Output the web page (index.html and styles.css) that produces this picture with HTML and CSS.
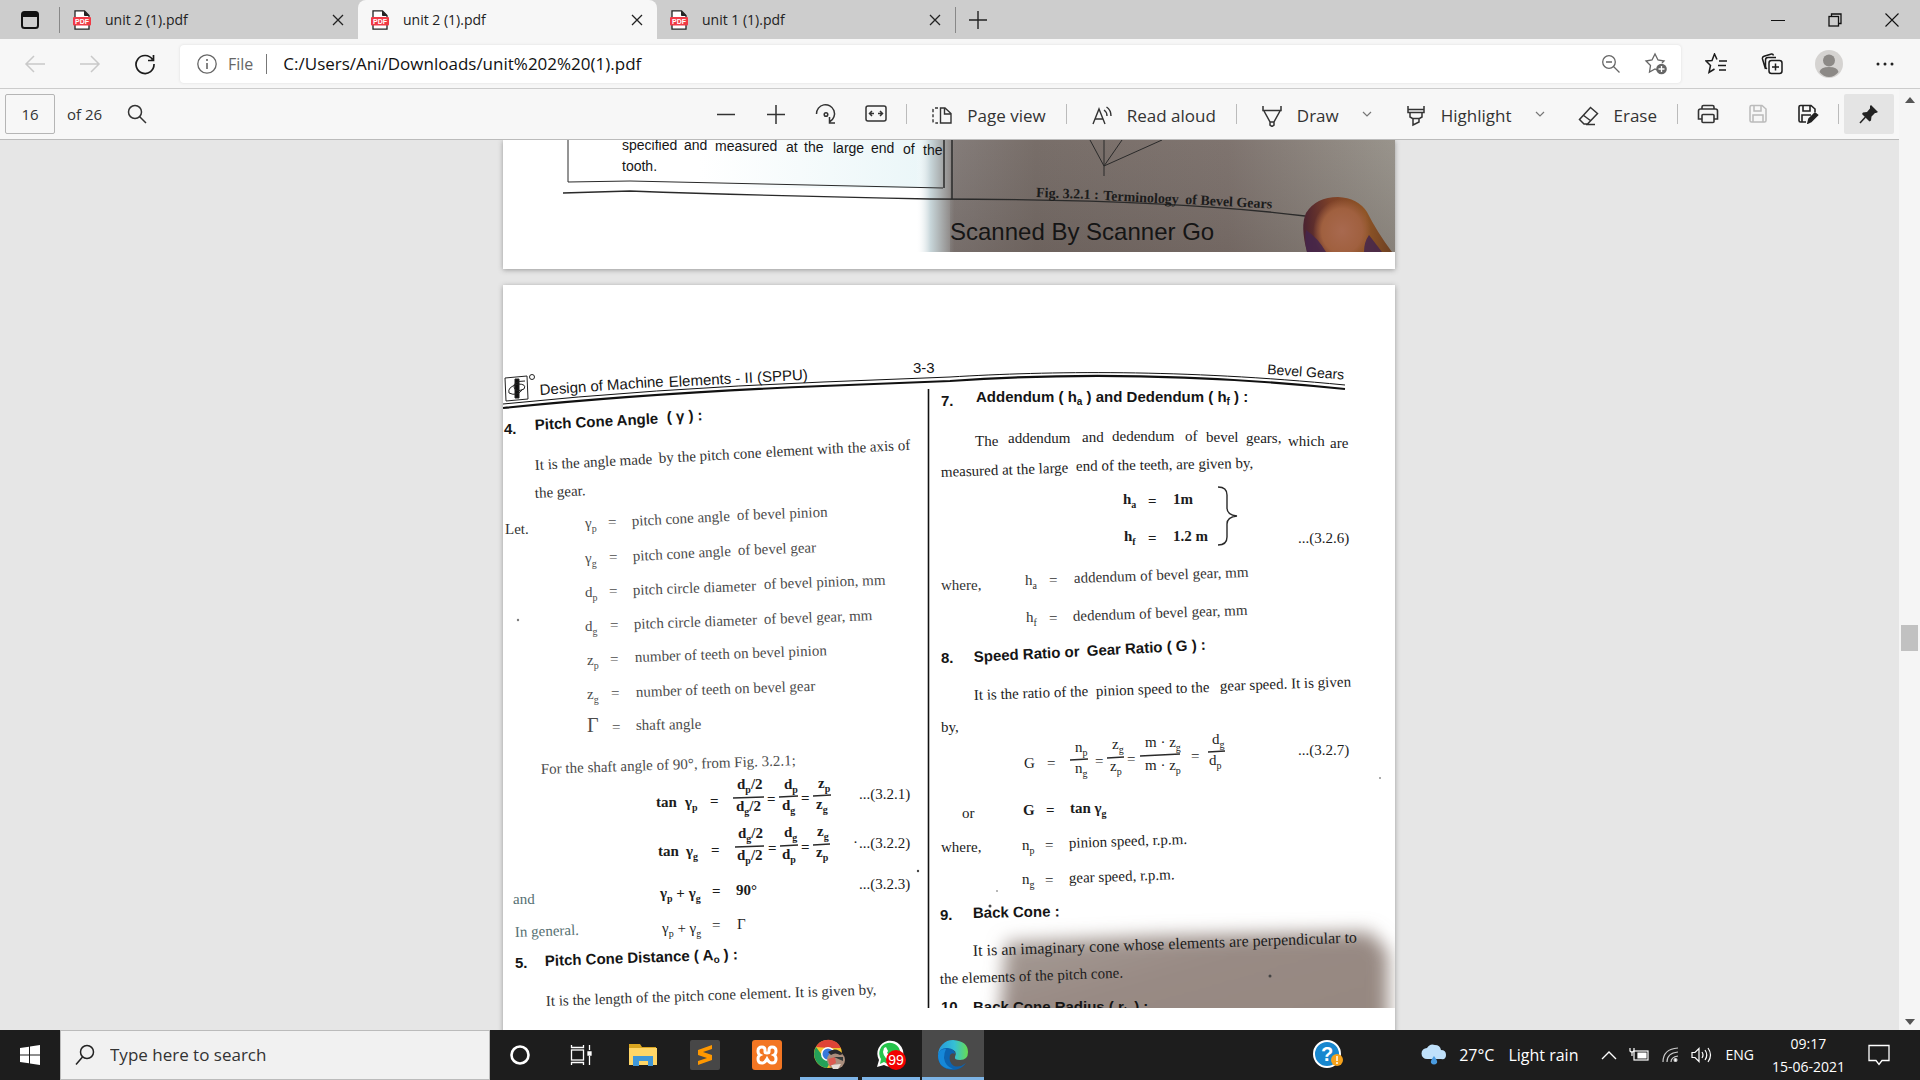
FILE: index.html
```html
<!DOCTYPE html>
<html lang="en">
<head>
<meta charset="utf-8">
<title>unit 2 (1).pdf</title>
<link rel="stylesheet" href="styles.css">
</head>
<body>
<svg class="defs" aria-hidden="true">
  <symbol id="pdf" viewBox="0 0 20 20"><path d="M3 .8h9.5L17 5.5v13.700H3z" fill="#fff" stroke="#222" stroke-width="1.300"/><path d="M12.500 1v4.500H17" fill="#222" stroke="#222"/><rect x="1" y="7" width="18" height="8.500" rx="1" fill="#f03a46"/></symbol>
  <symbol id="close" viewBox="0 0 12 12"><path d="M1 1l10 10M11 1L1 11" stroke="#222" stroke-width="1.300"/></symbol>
  <symbol id="chev" viewBox="0 0 10 10"><path d="M1 3l4 4 4-4" fill="none" stroke="#777" stroke-width="1.200"/></symbol>
</svg>

<header class="tabs">
  <button class="tab-actions" aria-label="Tab actions"><svg width="18" height="18" viewBox="0 0 18 18"><rect x="1" y="1" width="16" height="16" rx="2.500" fill="none" stroke="#111" stroke-width="2"/><path d="M1 3q0-2 2-2h12q2 0 2 2v3H1z" fill="#111"/></svg></button>
  <div class="tab first"><svg class="i20"><use href="#pdf"/><text x="10" y="14" text-anchor="middle" class="pdf-label">PDF</text></svg><span>unit 2 (1).pdf</span><button aria-label="Close tab"><svg class="i12"><use href="#close"/></svg></button></div>
  <div class="tab active"><svg class="i20"><use href="#pdf"/><text x="10" y="14" text-anchor="middle" class="pdf-label">PDF</text></svg><span>unit 2 (1).pdf</span><button aria-label="Close tab"><svg class="i12"><use href="#close"/></svg></button></div>
  <div class="tab last"><svg class="i20"><use href="#pdf"/><text x="10" y="14" text-anchor="middle" class="pdf-label">PDF</text></svg><span>unit 1 (1).pdf</span><button aria-label="Close tab"><svg class="i12"><use href="#close"/></svg></button></div>
  <button class="new-tab" aria-label="New tab"><svg width="18" height="18"><path d="M9 0v18M0 9h18" stroke="#222" stroke-width="1.400"/></svg></button>
  <div class="win">
    <button aria-label="Minimize"><svg width="14" height="14"><path d="M0 7.500h14" stroke="#111"/></svg></button>
    <button aria-label="Restore"><svg width="14" height="14" fill="none" stroke="#111" stroke-width="1.300"><rect x="1" y="3.500" width="9.500" height="9.500"/><path d="M3.500 3.500V1H13v9.500h-2.500"/></svg></button>
    <button aria-label="Close"><svg width="14" height="14"><path d="M.5.5l13 13M13.500.5l-13 13" stroke="#111" stroke-width="1.100"/></svg></button>
  </div>
</header>

<nav class="address">
  <button class="nav" aria-label="Back"><svg width="22" height="20" fill="none" stroke="#c9c9c9" stroke-width="1.500"><path d="M21 10H2M10 2l-8 8 8 8"/></svg></button>
  <button class="nav" aria-label="Forward"><svg width="22" height="20" fill="none" stroke="#c9c9c9" stroke-width="1.500"><path d="M1 10h19M12 2l8 8-8 8"/></svg></button>
  <button class="nav" aria-label="Refresh"><svg width="22" height="22" fill="none" stroke="#1b1b1b" stroke-width="1.700"><path d="M18.500 6.500A9 9 0 1 0 20 11M19.500 2v5.500H14"/></svg></button>
  <div class="urlbox">
    <svg width="20" height="20" fill="none" stroke="#666"><circle cx="10" cy="10" r="9.200" stroke-width="1.300"/><path d="M10 9v6M10 5v2" stroke-width="1.600"/></svg>
    <label for="url">File</label>
    <input id="url" value="C:/Users/Ani/Downloads/unit%202%20(1).pdf">
    <button aria-label="Zoom"><svg width="20" height="20" fill="none" stroke="#666" stroke-width="1.300"><circle cx="8" cy="8" r="6.300"/><path d="M12.500 12.500l6 6M5 8h6"/></svg></button>
    <button aria-label="Add to favorites"><svg width="24" height="24" fill="none" stroke="#666" stroke-width="1.300"><path d="M13 18l-2-1-5.500 3 1-6.500L2 9l6-1 3-6 3 6 6 1-2 2"/><circle cx="17.500" cy="17" r="5.300" fill="#666" stroke="none"/><path d="M17.500 14v6M14.500 17h6" stroke="#fff"/></svg></button>
  </div>
  <button class="nav" aria-label="Favorites"><svg width="24" height="22" fill="none" stroke="#1b1b1b" stroke-width="1.500"><path d="M12 6.500L9.500 1 7 7.500 1 8l4.500 4.500L4 19.500l5.500-3.500M14 8h8M13 12.500h8M14 17h7"/></svg></button>
  <button class="nav" aria-label="Collections"><svg width="24" height="22" fill="none" stroke="#1b1b1b" stroke-width="1.500"><path d="M4.500 16L1.500 6q-.5-2 1.500-2.700L10.500 1q1.500-.3 2 1.500M6 16q-1.500-1-1.500-3V7q0-2.500 2.500-2.500h8"/><rect x="8" y="7.500" width="13" height="13" rx="2.500"/><path d="M14.500 10.500v7M11 14h7"/></svg></button>
  <button class="nav" aria-label="Profile"><svg width="28" height="28"><circle cx="14" cy="14" r="14" fill="#d5d3d1"/><circle cx="14" cy="10.500" r="6" fill="#8c8986"/><path d="M4.500 22q1-5 9.500-5t9.500 5q-4 5-9.500 5t-9.500-5z" fill="#8c8986"/></svg></button>
  <button class="nav" aria-label="Settings and more"><svg width="18" height="4" fill="#222"><circle cx="2" cy="2" r="1.500"/><circle cx="9" cy="2" r="1.500"/><circle cx="16" cy="2" r="1.500"/></svg></button>
</nav>

<div class="viewer">
  <div class="viewer-main">
    <div class="toolbar">
      <input id="page" class="page-no" value="16"><label for="page">of 26</label>
      <button class="find" aria-label="Find"><svg width="20" height="20" fill="none" stroke="#333" stroke-width="1.500"><circle cx="8" cy="8" r="6.500"/><path d="M12.500 12.500l6.500 6.500"/></svg></button>
      <div class="tools">
        <button class="ib" aria-label="Zoom out"><svg width="20" height="20"><path d="M1 10.500h18" stroke="#333" stroke-width="1.500"/></svg></button>
        <button class="ib" aria-label="Zoom in"><svg width="20" height="20"><path d="M1 10.500h18M10 1v19" stroke="#333" stroke-width="1.500"/></svg></button>
        <button class="ib" aria-label="Rotate"><svg width="22" height="22" fill="none" stroke="#333" stroke-width="1.500"><path d="M1.500 11A9 9 0 1 1 15 18.500M14.500 14v6H20"/><circle cx="11" cy="11.500" r="1.800"/></svg></button>
        <button class="ib" aria-label="Fit to width"><svg width="22" height="20" fill="none" stroke="#333" stroke-width="1.500"><rect x="1" y="2" width="20" height="15" rx="2"/><path d="M9 9.500H4.500M7 7L4.500 9.500 7 12M13 9.500h4.500M15 7l2.500 2.500L15 12"/></svg></button>
        <i class="sep"></i>
        <button class="tb"><svg width="22" height="20" viewBox="0 0 22 20" fill="none" stroke="#333" stroke-width="1.400"><path d="M9.500 2H14l6 5.500V17H9.500zM13.500 2v6H20"/><path d="M7 2H4Q2 2 2 4v11q0 2 2 2h3" stroke-dasharray="3 2"/></svg>Page view</button>
        <i class="sep"></i>
        <button class="tb"><svg width="22" height="20" fill="none" stroke="#333" stroke-width="1.400"><path d="M2 18L8 3l6 15M4 13h8M13 4q3 2 3 6M15.500 1Q20 4 20 10"/></svg>Read aloud</button>
        <i class="sep"></i>
        <button class="tb tight"><svg width="22" height="22" fill="none" stroke="#333" stroke-width="1.500"><path d="M2 1v4.500h18V1M3 6l6 11v3l2 1.500 2-1.500v-3l6-11M9 17h4"/></svg>Draw</button>
        <button class="cb" aria-label="Draw options"><svg class="i10"><use href="#chev"/></svg></button>
        <button class="tb tight"><svg width="22" height="22" fill="none" stroke="#333" stroke-width="1.500"><path d="M3 1v6.500h16V1M3 4.500h16M5 8v4l2.500 1.500h7L17 12V8M8 14v6l6-3v-3"/></svg>Highlight</button>
        <button class="cb" aria-label="Highlight options"><svg class="i10"><use href="#chev"/></svg></button>
        <button class="tb"><svg width="22" height="22" fill="none" stroke="#333" stroke-width="1.500"><path d="M12.500 2.500l7 6-10 10.500H6L1.500 14.500zM5 10l8 6M8 19.500h9"/></svg>Erase</button>
        <i class="sep"></i>
        <button class="ib" aria-label="Print"><svg width="22" height="20" fill="none" stroke="#333" stroke-width="1.600"><path d="M5 5V3q0-1.500 1.500-1.500h9Q17 1.500 17 3v2M5 15H1.500V7q0-2 2-2h15q2 0 2 2v8H17"/><rect x="5" y="10.500" width="12" height="8" rx="1"/></svg></button>
        <button class="ib" aria-label="Save" disabled><svg width="20" height="20" fill="none" stroke="#bbb" stroke-width="1.500"><path d="M2 3q0-1.500 1.500-1.500H14L18 5v11.500q0 1.500-1.500 1.500h-13Q2 18 2 16.500zM6 2v5h7V2M5 18v-7h10v7"/></svg></button>
        <button class="ib" aria-label="Save as"><svg width="22" height="20" fill="none" stroke="#222" stroke-width="1.600"><path d="M9 18H3.500Q2 18 2 16.500V3q0-1.500 1.500-1.500H14L18 5v3M6 2v5h7V2M5 18v-7h9"/><path d="M11 19l1-4 6-6 2.500 2-6.500 6.500z" fill="#222"/></svg></button>
        <i class="sep"></i>
        <button class="ib pin" aria-label="Unpin toolbar"><svg width="22" height="20"><path d="M13 1l7 7-2 1-1 0-3.500 3.500-.5 4-1.500 1L4 10l1-1.500 4-.5L12 4.500V2z" fill="#222"/><path d="M7.500 13L2 19" stroke="#222" stroke-width="1.500"/></svg></button>
      </div>
    </div>

    <main class="pages">
      <section class="sheet">
        <svg class="scan" viewBox="503 140 892 129">
          <defs>
            <linearGradient id="photo"><stop offset="0" stop-color="#fff" stop-opacity="0"/><stop offset=".03" stop-color="#c8d6da"/><stop offset=".08" stop-color="#847c79"/><stop offset=".25" stop-color="#786e69"/><stop offset=".65" stop-color="#7f746f"/><stop offset="1" stop-color="#99948c"/></linearGradient>
            <linearGradient id="tint"><stop offset="0" stop-color="#fff"/><stop offset="1" stop-color="#eaf6f8"/></linearGradient>
            <linearGradient id="dim" x2="0" y2="1"><stop offset="0" stop-color="#444" stop-opacity="0"/><stop offset="1" stop-color="#3a2d28" stop-opacity=".18"/></linearGradient>
            <linearGradient id="thumb"><stop offset="0" stop-color="#4a2230"/><stop offset=".3" stop-color="#7c4028"/><stop offset=".7" stop-color="#8f5526"/><stop offset="1" stop-color="#6c3f22"/></linearGradient>
            <radialGradient id="nail"><stop offset="0" stop-color="#a8694f"/><stop offset=".7" stop-color="#a0603f"/><stop offset="1" stop-color="#a0603f" stop-opacity="0"/></radialGradient>
            <clipPath id="clip1"><rect x="503" y="140" width="892" height="112"/></clipPath>
          </defs>
          <g clip-path="url(#clip1)">
            <rect x="700" y="140" width="230" height="48" fill="url(#tint)"/>
            <rect x="916" y="140" width="479" height="112" fill="url(#photo)"/>
            <rect x="950" y="140" width="445" height="112" fill="url(#dim)"/>
            <g class="rule"><path d="M568 140v42l62-1 313 7"/><path d="M944 140v48M952 140v59" stroke-width="1.500"/><path d="M563 193l67-2q140 5 300 8 240 0 375 17" stroke-width="1.300"/><path d="M1090 140l14 26 18-26M1104 140v36M1104 166l58-26" stroke-width="1"/></g>
            <path d="M1307 252Q1300 226 1306 213Q1316 197 1338 197Q1358 198 1367 212Q1377 232 1392 252z" fill="url(#thumb)"/>
            <ellipse cx="1342" cy="231" rx="29" ry="32" fill="url(#nail)"/>
            <path d="M1307 252q-3-12-1-22 12 8 20 22zM1364 252q0-10 5-17l13 17z" fill="#44264c" opacity=".85"/>
            <g class="sans s14"><text x="622" y="150">specified</text><text x="684" y="150">and</text><text x="715" y="151">measured</text><text x="786" y="152">at</text><text x="804" y="152">the</text><text x="833" y="153">large</text><text x="871" y="153">end</text><text x="903" y="154">of</text><text x="923" y="155">the</text><text x="622" y="171">tooth.</text></g>
            <g class="serif b s14"><text transform="translate(1036 197) rotate(2)">Fig. 3.2.1 :</text><text transform="translate(1103 200) rotate(3)">Terminology</text><text transform="translate(1185 204) rotate(3)">of Bevel Gears</text></g>
            <text class="sans s24" x="950" y="240">Scanned By Scanner Go</text>
          </g>
        </svg>
      </section>

      <section class="sheet">
        <svg class="scan" viewBox="503 285 892 760">
          <defs>
            <clipPath id="clip2"><rect x="503" y="285" width="892" height="723"/></clipPath>
            <filter id="soft" x="-10%" y="-30%" width="120%" height="160%"><feGaussianBlur stdDeviation="9"/></filter>
            <linearGradient id="shade" y2="1"><stop offset="0" stop-color="#a89e98"/><stop offset=".4" stop-color="#988a84"/><stop offset="1" stop-color="#95877f"/></linearGradient>
          </defs>
          <g clip-path="url(#clip2)">
            <path d="M1006 942l150-6 100-2 114-2 18 20v90H998z" fill="url(#shade)" filter="url(#soft)"/>
            <g fill="none" stroke="#111"><path d="M503 404Q650 389 823 382L950 377C1050 371 1180 369 1345 385" stroke-width="1"/><path d="M503 408Q650 393 823 386L950 381C1050 374 1180 372 1345 389" stroke-width="2.200"/><path d="M928.500 389v619" stroke-width="1.600"/></g>
            <g fill="none" stroke="#222"><path d="M505 378l22-2 1 23-22 2z"/><path d="M515 379h4v19h-4z" fill="#111"/><path d="M525 381q-12 0-11 6t10 2q3-5-6-5-11 3-9 9 8 4 14-4"/><circle cx="532" cy="377" r="2.500"/></g>

            <g class="sans s15">
              <text transform="translate(540 395) rotate(-4)">Design of Machine</text><text transform="translate(669 387) rotate(-3)">Elements - II (SPPU)</text>
              <text x="913" y="373">3-3</text>
              <text class="s14" transform="translate(1267 374) rotate(4)">Bevel Gears</text>
            </g>
            <g class="sans b s15">
              <text x="504" y="434">4.</text><text transform="translate(535 430) rotate(-3)">Pitch Cone Angle</text><text transform="translate(667 422) rotate(-3)">( γ ) :</text>
              <text x="515" y="968">5.</text><text transform="translate(545 966) rotate(-2)">Pitch Cone Distance ( A<tspan class="sub" dy="3">o</tspan><tspan dy="-3"> ) :</tspan></text>
              <text x="941" y="406">7.</text><text x="976" y="402">Addendum ( h<tspan class="sub" dy="3">a</tspan><tspan dy="-3"> ) and Dedendum ( h</tspan><tspan class="sub" dy="3">f</tspan><tspan dy="-3"> ) :</tspan></text>
              <text x="941" y="663">8.</text><text transform="translate(974 662) rotate(-3)">Speed Ratio or</text><text transform="translate(1087 656) rotate(-3)">Gear Ratio ( G ) :</text>
              <text x="940" y="920">9.</text><text transform="translate(973 918) rotate(-1)">Back Cone :</text>
              <text x="941" y="1012">10.</text><text x="973" y="1012">Back Cone Radius ( r<tspan class="sub" dy="3">b</tspan><tspan dy="-3"> ) :</tspan></text>
            </g>

            <g class="serif s15 faint">
              <g class="mid"><text transform="translate(535 470) rotate(-3)">It is the angle made</text><text transform="translate(659 463) rotate(-3)">by the pitch cone</text><text transform="translate(766 457) rotate(-3)">element with</text><text transform="translate(848 453) rotate(-3)">the axis of</text></g>
              <text class="mid" transform="translate(535 498) rotate(-3)">the gear.</text>
              <text class="mid" x="505" y="534">Let.</text>
              <text x="585" y="528">γ<tspan class="sub" dy="4">p</tspan></text><text x="608" y="527">=</text><text transform="translate(632 526) rotate(-3)">pitch cone angle</text><text transform="translate(737 520) rotate(-2)">of bevel pinion</text>
              <text x="585" y="563">γ<tspan class="sub" dy="4">g</tspan></text><text x="609" y="562">=</text><text transform="translate(633 561) rotate(-3)">pitch cone angle</text><text transform="translate(738 555) rotate(-2)">of bevel gear</text>
              <text x="585" y="597">d<tspan class="sub" dy="4">p</tspan></text><text x="609" y="596">=</text><text transform="translate(633 595) rotate(-2)">pitch circle diameter</text><text transform="translate(764 589) rotate(-2)">of bevel pinion, mm</text>
              <text x="585" y="631">d<tspan class="sub" dy="4">g</tspan></text><text x="610" y="630">=</text><text transform="translate(634 629) rotate(-2)">pitch circle diameter</text><text transform="translate(764 624) rotate(-2)">of bevel gear, mm</text>
              <text x="587" y="665">z<tspan class="sub" dy="4">p</tspan></text><text x="610" y="664">=</text><text transform="translate(635 662) rotate(-2)">number of teeth on bevel pinion</text>
              <text x="587" y="699">z<tspan class="sub" dy="4">g</tspan></text><text x="611" y="698">=</text><text transform="translate(636 697) rotate(-2)">number of teeth on bevel gear</text>
              <text class="s20" x="587" y="732">Γ</text><text x="612" y="732">=</text><text transform="translate(636 730) rotate(-1)">shaft angle</text>
              <text transform="translate(541 774) rotate(-2)">For the shaft angle of 90°, from Fig. 3.2.1;</text>
              <text class="teal" x="513" y="904">and</text><text class="teal" transform="translate(515 937) rotate(-2)">In general.</text>
              <text class="mid" transform="translate(546 1006) rotate(-2)">It is the length of the pitch cone element. It is given by,</text>
            </g>

            <g class="serif b s15">
              <text x="656" y="807">tan</text><text x="685" y="807">γ<tspan class="sub" dy="4">p</tspan></text><text x="710" y="806">=</text>
              <text x="737" y="789">d<tspan class="sub" dy="4">p</tspan><tspan dy="-4">/2</tspan></text><text x="736" y="811">d<tspan class="sub" dy="4">g</tspan><tspan dy="-4">/2</tspan></text><text x="767" y="804">=</text>
              <text x="784" y="789">d<tspan class="sub" dy="4">p</tspan></text><text x="782" y="810">d<tspan class="sub" dy="4">g</tspan></text><text x="801" y="803">=</text>
              <text x="818" y="788">z<tspan class="sub" dy="4">p</tspan></text><text x="816" y="809">z<tspan class="sub" dy="4">g</tspan></text>
              <text x="658" y="856">tan</text><text x="686" y="856">γ<tspan class="sub" dy="4">g</tspan></text><text x="711" y="855">=</text>
              <text x="738" y="838">d<tspan class="sub" dy="4">g</tspan><tspan dy="-4">/2</tspan></text><text x="737" y="860">d<tspan class="sub" dy="4">p</tspan><tspan dy="-4">/2</tspan></text><text x="768" y="853">=</text>
              <text x="784" y="837">d<tspan class="sub" dy="4">g</tspan></text><text x="782" y="859">d<tspan class="sub" dy="4">p</tspan></text><text x="801" y="852">=</text>
              <text x="817" y="836">z<tspan class="sub" dy="4">g</tspan></text><text x="816" y="857">z<tspan class="sub" dy="4">p</tspan></text>
              <text x="660" y="898">γ<tspan class="sub" dy="4">p</tspan><tspan dy="-4"> + γ</tspan><tspan class="sub" dy="4">g</tspan></text><text x="712" y="896">=</text><text x="736" y="895">90°</text>
              <text x="1123" y="504">h<tspan class="sub" dy="4">a</tspan></text><text x="1148" y="506">=</text><text x="1173" y="504">1m</text>
              <text x="1124" y="541">h<tspan class="sub" dy="4">f</tspan></text><text x="1148" y="543">=</text><text x="1173" y="541">1.2 m</text>
              <text x="1023" y="815">G</text><text x="1046" y="815">=</text><text x="1070" y="813">tan γ<tspan class="sub" dy="4">g</tspan></text>
            </g>
            <g class="rule" stroke-width="1.400"><path d="M733 798l31-1M779 797l19-1M813 796l18-1M735 847l29-1M780 846l18-1M813 845l17-1M1070 760l18-1M1107 758l17-1M1140 756l40-2M1208 752l17-1"/><path d="M1218 487q9 0 9 8v13q0 7 10 8-10 1-10 8v13q0 8-9 8"/></g>

            <g class="serif s15">
              <text x="859" y="799">...(3.2.1)</text><text x="859" y="848">...(3.2.2)</text><text x="859" y="889">...(3.2.3)</text><text x="853" y="847">·</text>
              <text x="1298" y="543">...(3.2.6)</text><text x="1298" y="755">...(3.2.7)</text>
              <text x="662" y="933">γ<tspan class="sub" dy="4">p</tspan><tspan dy="-4"> + γ</tspan><tspan class="sub" dy="4">g</tspan></text><text x="712" y="930">=</text><text x="737" y="929">Γ</text>
              <text x="975" y="446">The</text><text x="1008" y="443">addendum</text><text x="1082" y="442">and</text><text x="1112" y="441">dedendum</text><text x="1185" y="441">of</text><text x="1206" y="442">bevel</text><text x="1246" y="443">gears,</text><text x="1288" y="446">which</text><text x="1330" y="448">are</text>
              <text transform="translate(941 477) rotate(-2)">measured at the large</text><text transform="translate(1076 471) rotate(-1)">end of the teeth, are given by,</text>
              <g class="mid"><text x="941" y="590">where,</text><text x="1025" y="585">h<tspan class="sub" dy="4">a</tspan></text><text x="1049" y="585">=</text><text transform="translate(1074 583) rotate(-2)">addendum of bevel gear, mm</text>
              <text x="1026" y="622">h<tspan class="sub" dy="4">f</tspan></text><text x="1049" y="623">=</text><text transform="translate(1073 621) rotate(-2)">dedendum of bevel gear, mm</text></g>
              <text transform="translate(974 700) rotate(-2)">It is the ratio of the</text><text transform="translate(1096 696) rotate(-2)">pinion speed to the</text><text transform="translate(1220 691) rotate(-2)">gear speed. It is given</text>
              <text x="941" y="732">by,</text>
              <text x="1024" y="768">G</text><text x="1047" y="768">=</text>
              <text x="1075" y="752">n<tspan class="sub" dy="4">p</tspan></text><text x="1075" y="773">n<tspan class="sub" dy="4">g</tspan></text><text x="1095" y="766">=</text>
              <text x="1112" y="749">z<tspan class="sub" dy="4">g</tspan></text><text x="1110" y="771">z<tspan class="sub" dy="4">p</tspan></text><text x="1127" y="764">=</text>
              <text x="1145" y="747">m · z<tspan class="sub" dy="4">g</tspan></text><text x="1145" y="770">m · z<tspan class="sub" dy="4">p</tspan></text><text x="1191" y="761">=</text>
              <text x="1212" y="744">d<tspan class="sub" dy="4">g</tspan></text><text x="1209" y="765">d<tspan class="sub" dy="4">p</tspan></text>
              <text x="962" y="818">or</text><text x="941" y="852">where,</text>
              <text x="1022" y="850">n<tspan class="sub" dy="4">p</tspan></text><text x="1045" y="850">=</text><text transform="translate(1069 848) rotate(-2)">pinion speed, r.p.m.</text>
              <text x="1022" y="884">n<tspan class="sub" dy="4">g</tspan></text><text x="1045" y="885">=</text><text transform="translate(1069 883) rotate(-2)">gear speed, r.p.m.</text>
              <text class="s16" transform="translate(973 956) rotate(-2)">It is an imaginary cone whose elements are perpendicular to</text>
              <text transform="translate(940 984) rotate(-2)">the elements of the pitch cone.</text>
            </g>
            <g fill="#444"><circle cx="918" cy="871" r="1.200"/><circle cx="990" cy="906" r="1.500"/><circle cx="1270" cy="976" r="1.500"/><circle cx="1380" cy="778" r="1" opacity=".6"/><circle cx="518" cy="620" r="1.200" opacity=".7"/><circle cx="997" cy="891" r="1" opacity=".5"/></g>
          </g>
        </svg>
      </section>
    </main>
  </div>
  <div class="scroll" aria-hidden="true"><i class="up"></i><i class="track"><b></b></i><i class="down"></i></div>
</div>

<footer class="taskbar">
  <button class="start" aria-label="Start"><svg width="20" height="20" fill="#fff"><path d="M0 3l9-1.300V9.500H0zM10 1.500L20 0v9.500H10zM0 10.500h9v7.800L0 17zM10 10.500h10V20l-10-1.500z"/></svg></button>
  <div class="search"><svg width="22" height="22" fill="none" stroke="#222" stroke-width="1.500"><circle cx="13" cy="8" r="6.500"/><path d="M8.500 13L2 20.500"/></svg><input aria-label="Search" placeholder="Type here to search"></div>
  <div class="apps">
    <button class="narrow" aria-label="Cortana"><svg width="22" height="22"><circle cx="11" cy="11" r="8.500" fill="none" stroke="#fff" stroke-width="2.600"/></svg></button>
    <button aria-label="Task view"><svg width="22" height="20" fill="none" stroke="#fff" stroke-width="1.300"><rect x="1.500" y="5" width="12" height="10"/><path d="M1.500 0v2.500h12V0M1.500 20v-2.500h12V20M19.500 0v5M19.500 11v9"/><path d="M18 7h3v3h-3z" fill="#fff"/></svg></button>
    <button aria-label="File Explorer"><svg width="28" height="24"><path d="M0 1h11l2 3h14v18H0z" fill="#d9a520"/><path d="M0 5h28v17H0z" fill="#ffd667"/><path d="M4 23V13h20v10h-5v-5h-9v5z" fill="#3f97d8"/></svg></button>
    <button aria-label="Sublime Text"><svg width="30" height="30"><rect width="30" height="30" rx="2" fill="#474747"/><path d="M22 5L8 10v5l9 3-9 3v4l14-5v-5l-9-3 9-3z" fill="#ff9800"/></svg></button>
    <button aria-label="XAMPP"><svg width="30" height="30"><rect width="30" height="30" rx="3" fill="#f37623"/><path d="M10 7q-4 0-4 4 0 3 2 4-2 1-2 4 0 4 4 4 3 0 5-4 2 4 5 4 4 0 4-4 0-3-2-4 2-1 2-4 0-4-4-4-3 0-3 3v2q0 1-2 1t-2-1v-2q0-3-3-3z" fill="none" stroke="#fff" stroke-width="3"/></svg></button>
    <button class="run" aria-label="Chrome"><svg width="32" height="32"><circle cx="15" cy="15" r="14" fill="#f4c430"/><path d="M3 8A14 14 0 0 1 28 9H15z" fill="#df4437"/><path d="M3 8a14 14 0 0 0 11 21l5-9-10-4z" fill="#24a058"/><circle cx="15" cy="15" r="7" fill="#fff"/><circle cx="15" cy="15" r="5.500" fill="#3778dc"/><circle cx="23" cy="21" r="9" fill="#aa8e7d"/><path d="M15 13q8-6 15 2l-3 1q-5-3-9 0z" fill="#28282c"/><path d="M18 26l10-1-3 5h-5z" fill="#e4ddd6"/><path d="M15 20l7-2 1 6-6 3z" fill="#dc5a50"/><path d="M21 18h9v4z" fill="#333a3a"/></svg></button>
    <button class="run" aria-label="WhatsApp"><svg width="32" height="32"><path d="M2 28l2-7A13 13 0 1 1 9 26z" fill="#fff"/><path d="M5 25l1-5A10.500 10.500 0 1 1 9 23z" fill="#26c44c"/><path d="M9 9l2-1 2 4-1 2 5 4-1 3q-7-1-8-8z" fill="#fff"/><circle cx="21" cy="21" r="10" fill="#f20000"/><text x="21" y="26" text-anchor="middle" class="badge">99</text></svg></button>
    <button class="run current" aria-label="Microsoft Edge"><svg width="30" height="30"><defs><linearGradient id="eg"><stop offset="0" stop-color="#2698dd"/><stop offset=".55" stop-color="#35c0d5"/><stop offset="1" stop-color="#68dc50"/></linearGradient></defs><path d="M0 15A15 15 0 0 1 15 0q15 1 15 12 0 8-8 8-6 0-5-3 3-7-5-8Q3 8 0 15z" fill="url(#eg)"/><path d="M0 15q2-8 10-7 7 1 7 6-3-2-5 1-2 7 4 11 6 2 12-3-5 7-13 7Q0 29 0 15z" fill="#0c63b0"/><path d="M0 15q2-7 8-6-2 4-2 9 1 8 9 11Q0 29 0 15z" fill="#1688d8"/></svg></button>
  </div>
  <div class="tray">
    <svg class="help" width="30" height="30"><circle cx="14" cy="14" r="13" fill="#1787cf" stroke="#fff" stroke-width="2"/><text x="14" y="21" text-anchor="middle" class="q">?</text><circle cx="24" cy="20" r="6" fill="#f5a11b"/><path d="M24 16v5M24 22v2" stroke="#fff" stroke-width="1.500"/></svg>
    <svg class="cloud" width="26" height="22"><path d="M6 15a5.500 5.500 0 0 1 0-11Q9-1 14 1q5 0 6 5 5 0 5 5t-5 4z" fill="#bfe0fa"/><path d="M13 12q-4 5-3 7 3 3 6 0 1-2-3-7z" fill="#4a9be0"/></svg>
    <span class="weather"><span>27°C</span><span>Light rain</span></span>
    <svg class="up-chev" width="16" height="10"><path d="M1 9l7-7 7 7" fill="none" stroke="#fff" stroke-width="1.400"/></svg>
    <svg width="20" height="16" fill="none" stroke="#fff" stroke-width="1.200"><rect x="5" y="4" width="14" height="9"/><path d="M9 6h8v5H9z" fill="#fff"/><path d="M1 1v3q2 2 4 0V1M3 5v4"/></svg>
    <svg width="18" height="16" fill="none" stroke="#ccc" stroke-width="1.200"><path d="M2 15Q2 2 17 1M6 15q0-9 11-10M10 15q0-5 7-6"/><circle cx="14.500" cy="13" r="1.500" fill="#fff"/></svg>
    <svg width="22" height="16" fill="none" stroke="#fff" stroke-width="1.200"><path d="M1 5.500h3l4-4v13l-4-4H1zM11 5q2 3 0 6M14 3q3.500 5 0 10M17 1q5 7 0 14"/></svg>
    <span class="lang">ENG</span>
    <time>09:17<br>15-06-2021</time>
    <svg class="note" width="22" height="22" fill="none" stroke="#fff" stroke-width="1.300"><path d="M1 1.500h20v15h-7l-3 4-3-4H1z"/></svg>
  </div>
</footer>
</body>
</html>
```
FILE: styles.css
```css
* { box-sizing: border-box; }
body { margin: 0; height: 100vh; display: flex; flex-direction: column; overflow: hidden; font: 16px/20px "Open Sans", "Noto Sans", sans-serif; color: #333; }
button { border: 0; padding: 0; margin: 0; background: none; font: inherit; color: inherit; display: flex; align-items: center; justify-content: center; flex: none; }
input { border: 0; outline: 0; padding: 0; margin: 0; background: none; font: inherit; color: inherit; min-width: 0; }
svg { flex: none; display: block; }
.defs { position: absolute; width: 0; height: 0; }
.i20 { width: 20px; height: 20px; }
.i12 { width: 12px; height: 12px; }
.i10 { width: 10px; height: 10px; }
.pdf-label { font: bold 7px "Liberation Sans", sans-serif; fill: #fff; }

.tabs { flex: none; height: 39px; display: flex; background: #cdcdcd; font-size: 14px; color: #222; }
.tab-actions { width: 59px; }
.tab { width: 299px; padding: 0 14px 0 12px; display: flex; align-items: center; gap: 13px; }
.tab span { flex: 1; }
.tab.first { border-left: 1px solid #888; }
.tab.first, .tab.last { border-image: linear-gradient(transparent 8px, #888 8px, #888 32px, transparent 32px) 1; }
.tab.last { border-right: 1px solid #888; }
.tab.active { background: #f7f7f7; border-radius: 8px 8px 0 0; }
.new-tab { width: 44px; }
.win { margin-left: auto; display: flex; }
.win button { width: 57px; }

.address { flex: none; height: 50px; display: flex; align-items: center; background: #f7f7f7; border-bottom: 1px solid #ccc; padding: 0 7px; }
.nav { width: 55px; height: 40px; }
.nav:nth-last-child(-n+4) { width: 56px; }
.urlbox { flex: 1; height: 38px; margin: 0 8px; padding: 0 3px 0 17px; display: flex; align-items: center; background: #fff; border-radius: 4px; box-shadow: 0 0 3px #ddd; color: #666; }
.urlbox label { margin-left: 11px; padding-right: 13px; border-right: 1px solid #777; }
.urlbox input { flex: 1; margin-left: 16px; font-size: 17px; color: #111; }
.urlbox button { width: 45px; height: 32px; }

.viewer { flex: 1; min-height: 0; display: flex; }
.viewer-main { flex: 1; min-width: 0; display: flex; flex-direction: column; }
.toolbar { flex: none; height: 51px; display: flex; align-items: center; background: #f7f7f7; border-bottom: 1px solid #bbb; padding: 0 5px; }
.page-no { width: 50px; height: 40px; border: 1px solid #b5b5b5; border-radius: 2px; text-align: center; font-size: 15px; }
.toolbar label { margin-left: 12px; font-size: 15px; }
.find { width: 50px; height: 40px; margin-left: 10px; }
.tools { margin-left: auto; display: flex; align-items: center; height: 40px; }
.ib { width: 50px; height: 40px; }
.tb { height: 40px; padding: 3px 15px 0 19px; gap: 14px; font-size: 17px; }
.tb.tight { padding-right: 10px; }
.cb { width: 37px; height: 40px; }
.sep { width: 1px; height: 20px; margin: 0 5px; background: #bbb; }
.pin { background: #e4e4e4; border-radius: 2px; }

.pages { flex: 1; min-height: 0; overflow: hidden; background: #e6e6e6; display: flex; flex-direction: column; align-items: center; gap: 16px; padding-right: 1px; }
.sheet { flex: none; width: 892px; max-width: 100%; background: #fff; box-shadow: 0 1px 5px #999; }
.scan { width: 100%; height: auto; }
.sans { font-family: "Liberation Sans", sans-serif; fill: #151515; }
.serif { font-family: "Liberation Serif", serif; fill: #1c1c1c; }
.b { font-weight: bold; }
.s14 { font-size: 14px; }
.s15 { font-size: 15px; }
.s16 { font-size: 16px; }
.s20 { font-size: 20px; }
.s24 { font-size: 24px; }
.sub { font-size: 10px; }
.faint { fill: #4c4c4c; }
.mid { fill: #333; }
.teal { fill: #567072; }
.rule { fill: none; stroke: #2a2a2a; }

.scroll { width: 21px; flex: none; background: #f5f5f5; display: flex; flex-direction: column; align-items: center; padding: 8px 0 5px; }
.up, .down { border: 5px solid transparent; }
.up { border-bottom: 6px solid #555; border-top: 0; }
.down { border-top: 6px solid #555; border-bottom: 0; }
.track { flex: 1; width: 17px; padding-top: 522px; }
.track b { display: block; height: 26px; background: #c1c1c1; }

.taskbar { flex: none; height: 50px; display: flex; background: #1d1d1d; color: #fff; font-size: 15px; }
.start { width: 60px; }
.search { width: 430px; background: #f1f1f1; border: 1px solid #bbb; display: flex; align-items: center; padding-left: 13px; gap: 14px; font-size: 17px; }
.search input { flex: 1; }
.search input::placeholder { color: #333; opacity: 1; }
.apps { display: flex; }
.apps button { width: 62px; padding-top: 2px; border-bottom: 3px solid transparent; }
.apps .narrow { width: 60px; }
.apps .run { border-image: linear-gradient(90deg, transparent 5px, #7db4e6 5px, #7db4e6 57px, transparent 57px) 3; }
.apps .current { background: #4a4a4a; border-image: linear-gradient(#7db4e6, #7db4e6) 3; }
.badge { font: 14px "Liberation Sans", sans-serif; fill: #fff; }
.q { font: bold 20px "Liberation Sans", sans-serif; fill: #fff; }
.tray { margin-left: auto; padding-right: 30px; display: flex; align-items: center; gap: 12px; }
.help { margin-right: 66px; }
.weather { font-size: 16px; display: flex; gap: 14px; margin-right: 11px; }
.lang { font-size: 14px; }
.tray time { text-align: center; font-size: 14px; line-height: 23px; margin-left: 6px; }
.note { margin-left: 11px; }
```
